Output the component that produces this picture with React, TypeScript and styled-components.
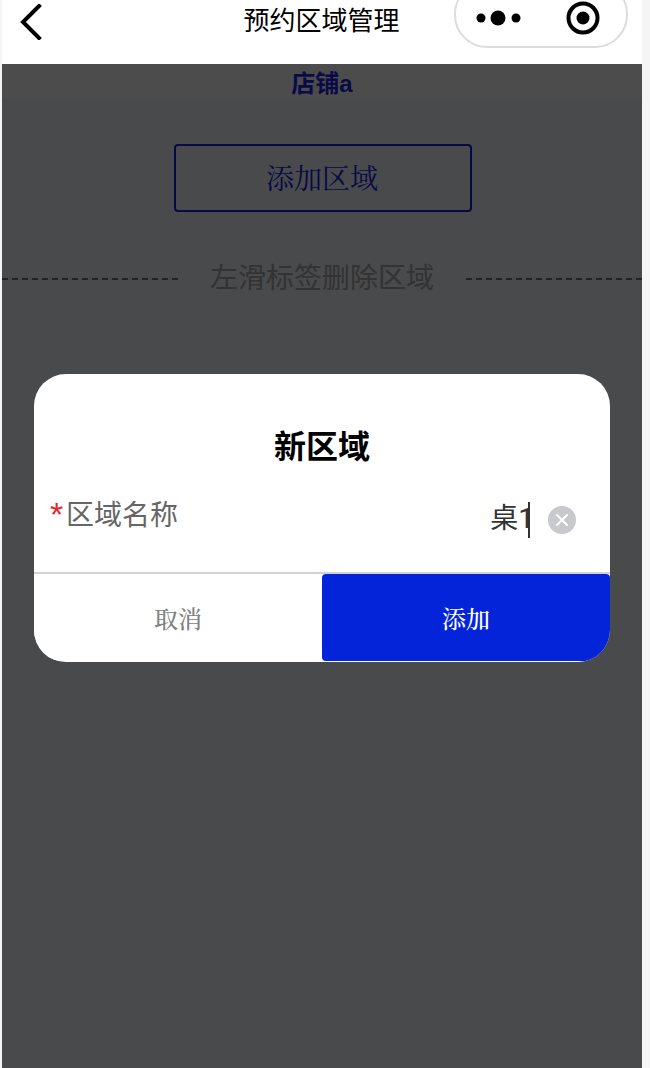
import { createGlobalStyle, styled } from "styled-components";

const sans = `"Liberation Sans", "Noto Sans CJK SC", sans-serif`;
const serif = `"Liberation Serif", "Noto Serif CJK SC", "Noto Sans CJK SC", serif`;

const GlobalStyle = createGlobalStyle`
    html, body {
        margin: 0;
        height: 100%;
        background: #f5f5f5;
        overflow: hidden;
    }
    * {
        box-sizing: border-box;
    }
`;

const Phone = styled.div`
    position: relative;
    width: 640px;
    height: 1068px;
    margin-left: 2px;
    background: #f6f8fc;
    font-family: ${sans};
    overflow: hidden;
`;

const NavBar = styled.header`
    display: grid;
    grid-template-columns: 1fr auto 1fr;
    height: 64px;
    background: #fff;
    overflow: hidden;
`;

const BackIcon = styled.svg`
    margin: 4px 0 0 17px;
    width: 26px;
    height: 36px;
`;

const NavTitle = styled.h1`
    margin: 0 1px 0 0;
    font-size: 26px;
    font-weight: 400;
    line-height: 42px;
    color: #000;
`;

const Capsule = styled.div`
    justify-self: end;
    display: flex;
    align-items: center;
    justify-content: space-between;
    width: 174px;
    height: 67px;
    margin: -19px 14px 0 0;
    padding: 7px 26px 0 20px;
    border: 2px solid #dcdcdc;
    border-radius: 33px;
`;

const ShopName = styled.div`
    height: 35px;
    background: #ffffff;
    text-align: center;
    font-size: 24px;
    font-weight: 700;
    line-height: 39px;
    color: #2424ee;
`;

const AddButton = styled.button`
    display: block;
    width: 298px;
    height: 68px;
    margin: 45px 0 0 172px;
    padding: 0 2px 3px 0;
    background: transparent;
    border: 2px solid #1c1ce6;
    border-radius: 4px;
    font-family: ${serif};
    font-size: 28px;
    color: #2424ee;
`;

const HintRow = styled.div`
    display: flex;
    align-items: center;
    gap: 32px;
    margin-top: 46px;
    font-size: 28px;
    line-height: 42px;
    color: #aaaaaa;
`;

const DashLine = styled.span`
    flex: 1;
    border-top: 2px dashed #777;
`;

const Overlay = styled.div`
    position: absolute;
    inset: 64px 0 0 0;
    display: flex;
    justify-content: center;
    align-items: flex-start;
    padding-top: 310px;
    background: rgba(0, 0, 0, 0.7);
`;

const Dialog = styled.div`
    width: 576px;
    height: 288px;
    background: #fff;
    border-radius: 32px;
    overflow: hidden;
`;

const DialogTitle = styled.h2`
    margin: 0;
    padding-top: 50px;
    text-align: center;
    font-size: 32px;
    font-weight: 700;
    line-height: 46px;
    color: #000;
`;

const FieldRow = styled.div`
    display: flex;
    height: 104px;
    padding: 0 34px 0 16px;
    border-bottom: 2px solid #d2d2d2;
`;

const Required = styled.span`
    width: 16px;
    margin-top: 24px;
    font-size: 34px;
    line-height: 40px;
    color: #e0282e;
`;

const FieldLabel = styled.label`
    flex: 1;
    margin-top: 25px;
    font-size: 28px;
    line-height: 42px;
    color: #666;
`;

const FieldValue = styled.div`
    display: flex;
    align-items: flex-start;
    height: 40px;
    margin-top: 29px;
    font-family: Roboto, "Noto Sans CJK SC", sans-serif;
    font-size: 28px;
    line-height: 40px;
    color: #333;
`;

const Caret = styled.span`
    width: 2px;
    height: 36px;
    margin: 3px 0 0 -6px;
    background: #333;
`;

const ClearIcon = styled.svg`
    width: 28px;
    height: 28px;
    margin: 36px 0 0 18px;
`;

const ButtonRow = styled.div`
    display: grid;
    grid-template-columns: 288px 288px;
    height: 87px;
`;

const DialogButton = styled.button<{ $primary?: boolean }>`
    height: 87px;
    padding: 0;
    border: 0;
    border-radius: ${(p) => (p.$primary ? "4px" : "0")};
    background: ${(p) => (p.$primary ? "#0424d9" : "#fff")};
    font-family: ${serif};
    font-size: 24px;
    font-weight: 500;
    color: ${(p) => (p.$primary ? "#fff" : "#808080")};
`;

export default function App() {
    return (
        <Phone>
            <GlobalStyle />
            <NavBar>
                <BackIcon viewBox="0 0 26 36" fill="none">
                    <path d="M20 2 L4 18 L20 34" stroke="#000" strokeWidth="4" strokeLinecap="square" />
                </BackIcon>
                <NavTitle>预约区域管理</NavTitle>
                <Capsule>
                    <svg width="46" height="16" viewBox="0 0 46 16">
                        <circle cx="5" cy="8" r="4.5" fill="#000" />
                        <circle cx="22" cy="8" r="7.5" fill="#000" />
                        <circle cx="40" cy="8" r="4.5" fill="#000" />
                    </svg>
                    <svg width="34" height="34" viewBox="0 0 34 34">
                        <circle cx="17" cy="17" r="14.5" fill="none" stroke="#000" strokeWidth="4" />
                        <circle cx="17" cy="17" r="6.5" fill="#000" />
                    </svg>
                </Capsule>
            </NavBar>
            <ShopName>店铺a</ShopName>
            <AddButton>添加区域</AddButton>
            <HintRow>
                <DashLine />
                左滑标签删除区域
                <DashLine />
            </HintRow>
            <Overlay>
                <Dialog>
                    <DialogTitle>新区域</DialogTitle>
                    <FieldRow>
                        <Required>*</Required>
                        <FieldLabel>区域名称</FieldLabel>
                        <FieldValue>
                            桌1
                            <Caret />
                        </FieldValue>
                        <ClearIcon viewBox="0 0 28 28">
                            <circle cx="14" cy="14" r="14" fill="#c8c9cc" />
                            <path d="M9 9 L19 19 M19 9 L9 19" stroke="#fff" strokeWidth="2" strokeLinecap="round" />
                        </ClearIcon>
                    </FieldRow>
                    <ButtonRow>
                        <DialogButton>取消</DialogButton>
                        <DialogButton $primary>添加</DialogButton>
                    </ButtonRow>
                </Dialog>
            </Overlay>
        </Phone>
    );
}
